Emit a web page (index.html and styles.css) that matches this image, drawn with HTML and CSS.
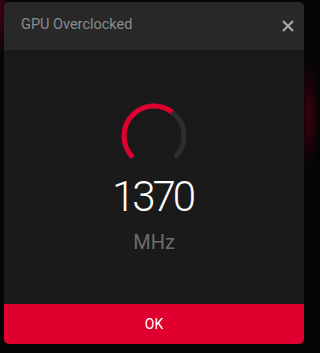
FILE: index.html
```html
<!DOCTYPE html>
<html>
<head>
<meta charset="utf-8">
<link rel="stylesheet" href="styles.css">
</head>
<body>
<div class="dialog">
  <div class="header">
    <span class="title">GPU Overclocked</span>
    <svg class="close" width="12" height="12" viewBox="0 0 12 12"><path d="M1 1 L11 11 M11 1 L1 11" stroke="#a8a8a8" stroke-width="2.2" fill="none"/></svg>
  </div>
  <div class="content">
    <svg class="gauge" width="66" height="66" viewBox="0 0 66 66">
      <circle cx="33" cy="33" r="30" fill="none" stroke="#2e2e2e" stroke-width="5" stroke-dasharray="141.37 47.12" transform="rotate(135 33 33)"/>
      <circle cx="33" cy="33" r="30" fill="none" stroke="#e0002f" stroke-width="5" stroke-dasharray="90 200" transform="rotate(135 33 33)"/>
    </svg>
    <div class="value">1370</div>
    <div class="unit">MHz</div>
  </div>
  <div class="ok">OK</div>
</div>
</body>
</html>
```
FILE: styles.css
```css
html, body {
  margin: 0;
  padding: 0;
}
body {
  width: 309px;
  height: 353px;
  overflow: hidden;
  background:
    radial-gradient(ellipse 10px 45px at 0 12px, rgba(75,0,18,0.85), rgba(0,0,0,0) 100%),
    radial-gradient(ellipse 10px 55px at 309px 115px, rgba(70,0,16,0.8), rgba(0,0,0,0) 100%),
    #050505;
  font-family: Roboto, "Liberation Sans", sans-serif;
  padding-top: 2px;
  box-sizing: border-box;
}
.dialog {
  margin-left: 4px;
  width: 300px;
  border-radius: 5px;
  overflow: hidden;
  background: #1a1a1a;
}
.header {
  height: 48px;
  background: #282828;
  display: flex;
  align-items: center;
  justify-content: space-between;
  padding: 0 10px 0 17px;
}
.title {
  color: #8a8c8e;
  font-size: 14.5px;
  margin-top: -3px;
}
.close {
  display: block;
}
.content {
  height: 254px;
  display: flex;
  flex-direction: column;
  align-items: center;
  padding-top: 53px;
  box-sizing: border-box;
}
.gauge {
  display: block;
}
.value {
  margin-top: 6px;
  color: #ffffff;
  font-size: 42px;
  line-height: 44px;
  font-weight: 300;
  letter-spacing: -3px;
  margin-left: -3px;
}
.unit {
  margin-top: 11px;
  color: #6c6c6c;
  font-size: 20px;
  line-height: 24px;
}
.ok {
  height: 40px;
  background: #e0002f;
  color: #ffffff;
  font-size: 14px;
  display: flex;
  align-items: center;
  justify-content: center;
}
```
